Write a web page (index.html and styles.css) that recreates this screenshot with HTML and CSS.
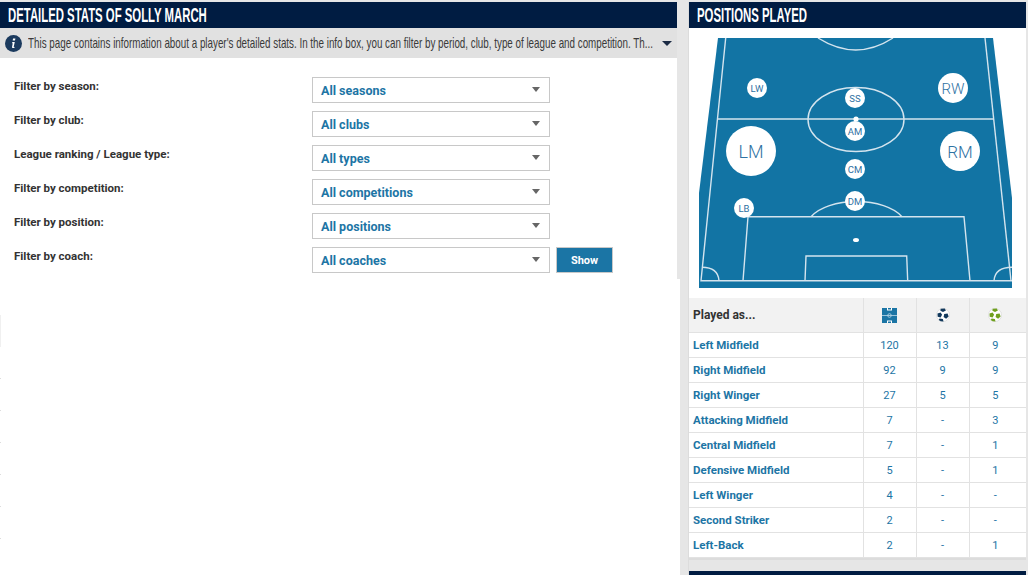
FILE: index.html
```html
<!DOCTYPE html>
<html lang="en">
<head>
<meta charset="utf-8">
<title>Detailed stats of Solly March</title>
<link rel="stylesheet" href="styles.css">
</head>
<body>
<div class="edge-marks"></div>
<div class="page">
  <main class="main-col">
    <section class="filter-panel">
      <h1 class="box-title"><span class="cond title-text">DETAILED STATS OF SOLLY MARCH</span></h1>
      <div class="info-bar">
        <svg class="info-icon" viewBox="0 0 16 16" width="17" height="17"><circle cx="8" cy="8" r="8" fill="#1b3a5e"/><path d="M7.6 3.2h2.2l-.4 2H7.2zM7 6.6h2.2l-1 4.4c-.1.4.3.4.8.1l.1.6c-.8.7-2.6 1-2.5-.3l.7-3.7H6.5z" fill="#fff"/></svg>
        <span class="cond info-text">This page contains information about a player's detailed stats. In the info box, you can filter by period, club, type of league and competition. Th...</span>
        <span class="info-caret"></span>
      </div>
      <form class="filters">
        <div class="filter-row"><span class="filter-label">Filter by season:</span><div class="select">All seasons<i class="select-caret"></i></div></div>
        <div class="filter-row"><span class="filter-label">Filter by club:</span><div class="select">All clubs<i class="select-caret"></i></div></div>
        <div class="filter-row"><span class="filter-label">League ranking / League type:</span><div class="select">All types<i class="select-caret"></i></div></div>
        <div class="filter-row"><span class="filter-label">Filter by competition:</span><div class="select">All competitions<i class="select-caret"></i></div></div>
        <div class="filter-row"><span class="filter-label">Filter by position:</span><div class="select">All positions<i class="select-caret"></i></div></div>
        <div class="filter-row"><span class="filter-label">Filter by coach:</span><div class="select">All coaches<i class="select-caret"></i></div><button class="show-btn" type="button">Show</button></div>
      </form>
    </section>
  </main>
  <aside class="side-col">
    <section class="side-panel">
      <h2 class="box-title side-title"><span class="cond title-text">POSITIONS PLAYED</span></h2>
      <div class="pitch-wrap">
        <div class="pitch">
          <svg class="pitch-svg" viewBox="0 0 313 250" width="313" height="250">
            <path d="M19 0H294L313 160V250H0V155Z" fill="#1274a4"/>
            <g fill="none" stroke="#d4e4ee" stroke-width="1.4">
              <path d="M26.7 0L2 242.7H313"/>
              <path d="M286 0L312 242.7"/>
              <path d="M18.5 81H294.7"/>
              <ellipse cx="157" cy="81.5" rx="48" ry="32"/>
              <path d="M119 0Q157 24 194 0"/>
              <path d="M44 242.7L49 178.7H265L271 242.7"/>
              <path d="M112 178.7A50 26 0 0 1 203 178.7"/>
              <path d="M106 242.7L107 218H207.7L208.7 242.7"/>
              <path d="M3 229.3Q19 229.3 20 242.7"/>
              <path d="M295 242.7Q296 229.3 313 229.3"/>
            </g>
            <circle cx="157" cy="81" r="2.6" fill="#fff"/>
            <ellipse cx="157" cy="202" rx="3" ry="2" fill="#fff"/>
          </svg>
          <span class="pos pos-sm pos-lw">LW</span>
          <span class="pos pos-lg pos-rw">RW</span>
          <span class="pos pos-sm pos-ss">SS</span>
          <span class="pos pos-sm pos-am">AM</span>
          <span class="pos pos-xl pos-lm">LM</span>
          <span class="pos pos-xxl pos-rm">RM</span>
          <span class="pos pos-sm pos-cm">CM</span>
          <span class="pos pos-sm pos-dm">DM</span>
          <span class="pos pos-sm pos-lb">LB</span>
        </div>
      </div>
      <table class="pos-table">
        <thead>
          <tr>
            <th class="name-col">Played as...</th>
            <th>
              <svg class="th-icon" viewBox="0 0 15 15" width="15" height="15"><rect width="15" height="15" fill="#1b75a5"/><g fill="none" stroke="#bcd8e8" stroke-width=".8"><path d="M0 7.5H15"/><circle cx="7.5" cy="7.5" r="1.8"/></g><path d="M5 0H6V1.5H9V0H10V2.5H5ZM5 15H6V13.5H9V15H10V12.5H5Z" fill="#fff"/></svg>
            </th>
            <th>
              <svg class="th-icon" viewBox="0 0 14 14" width="14" height="14"><circle cx="7" cy="7" r="6.5" fill="#fff" stroke="#ccc" stroke-width=".5"/><g fill="#12395c"><path d="M1.5 5.4l3.1-.9 1.5 2.2-1.5 2.7-2.9-.7z"/><path d="M8.2 6l3.4-.5 1 2.9-2.5 2.4-2.5-1.8z"/><path d="M4.6.7l4.2-.2 1.1 2.1-2.9 1.4-2.6-1.2z"/><path d="M3.6 10.4l3.3.7.6 2.4-2.8-.2-2-1.4z"/></g></svg>
            </th>
            <th>
              <svg class="th-icon" viewBox="0 0 14 14" width="14" height="14"><circle cx="7" cy="7" r="6.5" fill="#fff" stroke="#ccc" stroke-width=".5"/><g fill="#6fa01e"><path d="M1.5 5.4l3.1-.9 1.5 2.2-1.5 2.7-2.9-.7z"/><path d="M8.2 6l3.4-.5 1 2.9-2.5 2.4-2.5-1.8z"/><path d="M4.6.7l4.2-.2 1.1 2.1-2.9 1.4-2.6-1.2z"/><path d="M3.6 10.4l3.3.7.6 2.4-2.8-.2-2-1.4z"/></g></svg>
            </th>
          </tr>
        </thead>
        <tbody>
          <tr><td class="name-col">Left Midfield</td><td>120</td><td>13</td><td>9</td></tr>
          <tr><td class="name-col">Right Midfield</td><td>92</td><td>9</td><td>9</td></tr>
          <tr><td class="name-col">Right Winger</td><td>27</td><td>5</td><td>5</td></tr>
          <tr><td class="name-col">Attacking Midfield</td><td>7</td><td>-</td><td>3</td></tr>
          <tr><td class="name-col">Central Midfield</td><td>7</td><td>-</td><td>1</td></tr>
          <tr><td class="name-col">Defensive Midfield</td><td>5</td><td>-</td><td>1</td></tr>
          <tr><td class="name-col">Left Winger</td><td>4</td><td>-</td><td>-</td></tr>
          <tr><td class="name-col">Second Striker</td><td>2</td><td>-</td><td>-</td></tr>
          <tr><td class="name-col">Left-Back</td><td>2</td><td>-</td><td>1</td></tr>
        </tbody>
      </table>
    </section>
    <div class="next-panel"></div>
  </aside>
</div>
</body>
</html>
```
FILE: styles.css
```css
* { box-sizing: border-box; }
html, body { margin: 0; height: 575px; overflow: hidden; }
body {
  background: #e6e6e6;
  font-family: Roboto, "Noto Sans", sans-serif;
  font-size: 12px;
  color: #333;
  position: relative;
}
.edge-marks {
  position: absolute;
  left: 0;
  top: 315px;
  width: 1px;
  height: 243px;
  z-index: 2;
  background:
    linear-gradient(#f0f0f0, #f0f0f0) 0 0 / 1px 32px no-repeat,
    repeating-linear-gradient(#fff 0 31px, #ddd 31px 32px, #fff 32px 32px);
}
.page {
  display: grid;
  grid-template-columns: 680px 337px;
  column-gap: 9px;
  padding-top: 2px;
  height: 575px;
}
.main-col { background: #fff; }
.filter-panel {
  height: 277px;
  border-right: 3px solid #e6e6e6;
  background: #fff;
}
.box-title {
  margin: 0;
  height: 26px;
  background: #001c42;
  color: #fff;
  font-weight: 400;
  font-size: 20px;
  line-height: 26px;
  padding-left: 8px;
  overflow: hidden;
  white-space: nowrap;
}
.cond {
  display: inline-block;
  font-family: "Liberation Sans", sans-serif;
  white-space: nowrap;
  transform-origin: 0 50%;
}
.title-text { font-weight: 700; transform: scaleX(0.568); }
.info-bar {
  height: 30px;
  background: #e1e1e1;
  display: flex;
  align-items: center;
  padding-left: 5px;
  position: relative;
  overflow: hidden;
}
.info-icon { flex: none; margin-right: 6px; }
.info-text { flex: none; font-size: 14.5px; color: #3a3a3a; transform: scaleX(0.677); }
.info-caret {
  position: absolute;
  left: 662px;
  top: 13px;
  border-style: solid;
  border-width: 5px 5px 0;
  border-color: #1b2b44 transparent transparent;
}
.filters { padding: 19px 0 0 14px; }
.filter-row {
  display: flex;
  height: 34px;
  align-items: flex-start;
}
.filter-label {
  width: 298px;
  font-weight: 700;
  font-size: 11.5px;
  line-height: 18px;
  color: #333;
}
.select {
  width: 238px;
  height: 26px;
  border: 1px solid #c8c8c8;
  background: #fff;
  padding-left: 8px;
  font-weight: 700;
  font-size: 12.5px;
  line-height: 26px;
  color: #1d75a5;
  position: relative;
}
.select-caret {
  position: absolute;
  right: 9px;
  top: 9px;
  border-style: solid;
  border-width: 5px 4px 0;
  border-color: #666 transparent transparent;
}
.show-btn {
  margin-left: 6px;
  width: 57px;
  height: 26px;
  border: 1px solid #c8c8c8;
  background: #1b75a5;
  color: #fff;
  font: 700 11px Roboto, sans-serif;
  padding: 0;
}
.side-col {
  border-left: 1px solid #dcdcdc;
  margin-left: -1px;
  width: 338px;
}
.side-panel { background: #fff; border-bottom: 2px solid #dcdcdc; }
.side-title { padding-left: 8px; }
.pitch-wrap {
  padding: 10px 0 10px 10px;
  height: 270px;
}
.pitch {
  position: relative;
  width: 313px;
  height: 250px;
}
.pitch-svg { display: block; overflow: hidden; }
.pos {
  position: absolute;
  transform: translate(-50%, -50%);
  border-radius: 50%;
  background: #fff;
  color: #2f72a3;
  display: flex;
  align-items: center;
  justify-content: center;
  font-family: Roboto, sans-serif;
  font-weight: 300;
}
.pos-sm { width: 20px; height: 20px; font-size: 9.5px; font-weight: 400; }
.pos-lg { width: 30px; height: 30px; font-size: 15px; padding-top: 2px; }
.pos-xxl { width: 40px; height: 40px; font-size: 17px; padding-top: 2px; }
.pos-xl { width: 50px; height: 50px; font-size: 18px; }
.pos-lw { left: 58px; top: 50px; }
.pos-rw { left: 254px; top: 50px; }
.pos-ss { left: 156px; top: 60px; }
.pos-am { left: 156px; top: 93px; }
.pos-lm { left: 52px; top: 113px; }
.pos-rm { left: 261px; top: 113px; }
.pos-cm { left: 156px; top: 131px; }
.pos-dm { left: 156px; top: 163px; }
.pos-lb { left: 45px; top: 170px; }
.pos-table {
  width: 337px;
  table-layout: fixed;
  border-collapse: collapse;
}
.pos-table th, .pos-table td {
  padding: 1px 0 0;
  text-align: center;
  border-left: 1px solid #e2e2e2;
  border-bottom: 1px solid #e2e2e2;
  font-size: 11px;
  color: #1d75a5;
  height: 25px;
}
.pos-table th { height: 34px; background: #f2f2f2; }
.pos-table th:nth-child(2), .pos-table td:nth-child(2),
.pos-table th:nth-child(3), .pos-table td:nth-child(3) { width: 53px; }
.pos-table th:nth-child(4), .pos-table td:nth-child(4) { width: 57px; padding-right: 5px; }
.pos-table .name-col {
  width: 174px;
  border-left: 0;
  text-align: left;
  padding-left: 4px;
  font-weight: 700;
  font-size: 11.5px;
}
.pos-table th.name-col { color: #333; font-size: 12px; }
.th-icon { display: block; margin: 0 auto; }
.next-panel {
  margin-top: 11px;
  height: 20px;
  background: #001c42;
}
```
